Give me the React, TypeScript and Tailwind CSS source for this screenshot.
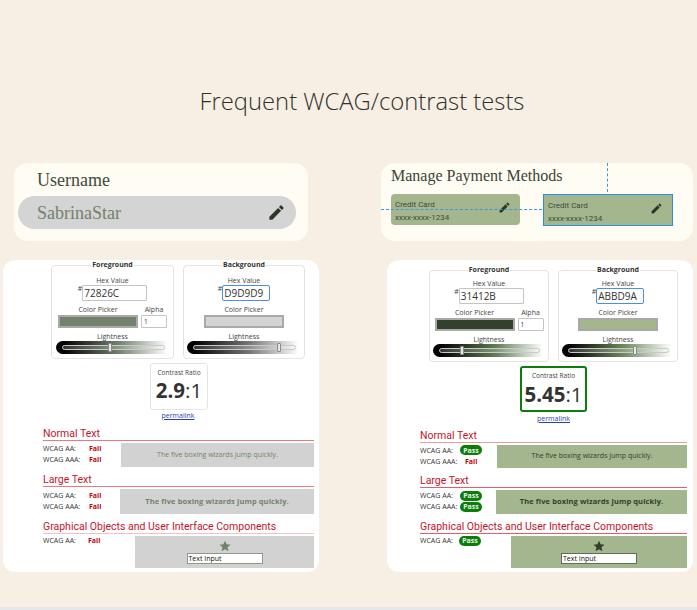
const SANS = "font-['Open_Sans','Noto_Sans',sans-serif]";
const ROBOTO = "font-['Roboto','Liberation_Sans',sans-serif]";
const SERIF = "font-['Liberation_Serif','DejaVu_Serif',serif]";

function Pencil({ className }: { className: string }) {
  return (
    <svg viewBox="0 0 24 24" className={className} fill="#2b3627">
      <path d="M3 17.25V21h3.75L17.81 9.94l-3.75-3.75L3 17.25zM20.71 7.04a1 1 0 0 0 0-1.41l-2.34-2.34a1 1 0 0 0-1.41 0l-1.83 1.83 3.75 3.75 1.83-1.83z" />
    </svg>
  );
}

function Pass() {
  return <span className="inline-flex h-[10px] w-[22px] items-center justify-center rounded-full bg-[#0a7d0a] text-[7px] font-bold leading-none text-[#e8f3e8]">Pass</span>;
}
function Fail() {
  return <span className="inline-block text-[7px] font-bold leading-none text-[#c4000c]">Fail</span>;
}

function Field({
  title, hex, focused, swatch, alpha, thumb, mid, end, box, hexTop, slider,
}: { title: string; hex: string; focused?: boolean; swatch: string; alpha?: boolean; thumb: number; mid: string; end: string; box: string; hexTop: string; slider: string }) {
  return (
    <fieldset className={`${box} flex flex-col items-center rounded-[4px] border border-[#e3e3e3] px-[3px]`}>
      <legend className="mx-auto px-[1px] text-[7px] font-bold leading-[8px] text-[#333]">{title}</legend>
      <div className={`${hexTop} text-[7px] leading-[9px] text-[#444]`}>Hex Value</div>
      <div className="flex items-start">
        <span className="mt-[-1px] text-[7px] leading-[9px] text-[#444]">#</span>
        <div className={`flex h-[16px] items-center border pl-[1px] text-[10px] leading-none text-[#333] ${focused ? "w-[48px] rounded-[2px] border-[#4a8fe0]" : "w-[65px] rounded-[1px] border-[#c4c4c4]"}`}>{hex}</div>
      </div>
      <div className={`mt-[4px] flex items-start justify-center gap-[3px] ${alpha ? "" : "w-[80px]"}`}>
        <div className="flex flex-col items-center">
          <div className="text-[7px] leading-[9px] text-[#444]">Color Picker</div>
          <div className="mt-[1px] h-[13px] w-[80px] border-2 border-[#a9a9a9]" style={{ backgroundColor: swatch }} />
        </div>
        {alpha && (
          <div className="flex flex-col items-center">
            <div className="text-[7px] leading-[9px] text-[#444]">Alpha</div>
            <div className="mt-[1px] flex h-[13px] w-[26px] items-center rounded-[1px] border border-[#c4c4c4] pl-[2px] text-[6.5px] text-[#333]">1</div>
          </div>
        )}
      </div>
      <div className="mt-[4px] text-[7px] leading-[9px] text-[#444]">Lightness</div>
      <div className={`${slider} relative h-[13px] rounded-l-full`} style={{ background: `linear-gradient(to right, #000 6%, ${mid} 55%, ${end} 98%)` }}>
        <div className="absolute left-[6px] right-[5px] top-[4px] h-[5px] rounded-full border border-[#c9c9c9] bg-white/20" />
        <div className="absolute top-[2px] h-[9px] w-[4px] rounded-[1px] border border-[#8a8a8a] bg-[#e8e8e8]" style={{ left: thumb }} />
      </div>
    </fieldset>
  );
}

function Row({ label, children, gap }: { label: string; children: React.ReactNode; gap: string }) {
  return (
    <div className="flex h-[11px] items-center text-[7px] leading-none text-[#333]">
      <span className={gap}>{label}</span>
      {children}
    </div>
  );
}

function Heading({ children, line }: { children: React.ReactNode; line: string }) {
  return <div className={`${ROBOTO} h-[14px] border-b text-[10.5px] leading-[13px] text-[#c4142b] ${line}`}>{children}</div>;
}

function Preview({ bg, fg, bold, className }: { bg: string; fg: string; bold?: boolean; className: string }) {
  return (
    <div className={`flex items-center justify-center ${bold ? "text-[7.5px] font-bold tracking-[0.1px]" : "text-[7px]"} ${className}`} style={{ backgroundColor: bg, color: fg }}>
      The five boxing wizards jump quickly.
    </div>
  );
}

function GraphicPreview({ bg, fg, className, inputBorder }: { bg: string; fg: string; className: string; inputBorder: string }) {
  return (
    <div className={`flex flex-col items-center ${className}`} style={{ backgroundColor: bg }}>
      <svg viewBox="0 0 24 24" className="mb-[1px] mt-[4px] h-[12px] w-[12px]" fill={fg}>
        <path d="M12 1.5l3.2 7.2 7.8.8-5.9 5.2 1.7 7.7L12 18.4l-6.8 4 1.7-7.7L1 9.5l7.8-.8z" />
      </svg>
      <div className="flex h-[11px] w-[76px] items-center bg-white pl-[1px] text-[7px] leading-none text-[#111]" style={{ border: `1.5px solid ${inputBorder}` }}>
        Text Input
      </div>
    </div>
  );
}

export default function App() {
  return (
    <div className={`${SANS} flex h-[610px] w-[697px] flex-col overflow-hidden bg-[#f8efe4] antialiased`}>
      <h1 className="mt-[85px] h-[32px] pl-[27px] text-center text-[23.8px] font-light leading-[32px] text-[#2f322b]">
        Frequent WCAG/contrast tests
      </h1>

      <div className="mt-[46px] flex items-start pl-[14px]">
        <div className="flex h-[78px] w-[294px] flex-col rounded-[14px] bg-[#fffcf4] pl-[4px]">
          <div className={`${SERIF} mt-[6px] pl-[19px] text-[18px] leading-[22px] text-[#3d4a38]`}>Username</div>
          <div className="mt-[5px] flex h-[33px] w-[278px] items-center justify-between rounded-full bg-[#d4d4d4] pl-[19px] pr-[10px]">
            <span className={`${SERIF} text-[18px] leading-none text-[#72826c]`}>SabrinaStar</span>
            <Pencil className="h-[19px] w-[19px]" />
          </div>
        </div>

        <div className="relative ml-[73px] flex h-[78px] w-[312px] flex-col rounded-[14px] bg-[#fffcf4] pl-[10px]">
          <div className={`${SERIF} mt-[2px] text-[16px] leading-[22px] text-[#3a4435]`}>Manage Payment Methods</div>
          <div className="mt-[7px] flex items-start gap-[23px]">
            <div className={`${ROBOTO} flex h-[31px] w-[129px] items-start justify-between rounded-[4px] bg-[#a4b68e] pl-[4px] pr-[9px] pt-[4px] text-[8px] leading-[13px] text-[#3f4a39]`}>
              <div>Credit Card<br />xxxx-xxxx-1234</div>
              <Pencil className="mt-[3px] h-[13px] w-[13px]" />
            </div>
            <div className={`${ROBOTO} flex h-[32px] w-[130px] items-start justify-between border border-[#2b8de0] bg-[#a4b68e] pl-[4px] pr-[9px] pt-[4px] text-[8px] leading-[13px] text-[#3f4a39]`}>
              <div>Credit Card<br />xxxx-xxxx-1234</div>
              <Pencil className="mt-[3px] h-[13px] w-[13px]" />
            </div>
          </div>
          <div className="absolute left-0 top-[46px] w-[161px] border-t border-dashed border-[#3f96e6]" />
          <div className="absolute left-[226px] top-0 h-[29px] border-l border-dashed border-[#3f96e6]" />
        </div>
      </div>

      <div className="mt-[19px] flex items-start pl-[3px]">
        {/* left panel */}
        <div className="h-[312px] w-[316px] rounded-[12px] bg-white">
          <div className="ml-[48px] mt-[1px] flex gap-[9px]">
            <Field box="h-[98px] w-[123px]" hexTop="mt-[7px]" slider="w-[114px]" title="Foreground" hex="72826C" swatch="#72826c" alpha thumb={52} mid="#72826c" end="#ffffff" />
            <Field box="h-[98px] w-[122px]" hexTop="mt-[7px]" slider="w-[114px]" title="Background" hex="D9D9D9" focused swatch="#d4d4d4" thumb={90} mid="#777777" end="#ffffff" />
          </div>
          <div className="ml-[147px] mt-[4px] flex h-[47px] w-[58px] flex-col items-center rounded-[3px] border border-[#e5e5e5]">
            <div className="mt-[3px] text-[6.5px] leading-[11px] text-[#444]">Contrast Ratio</div>
            <div className="text-[20.5px] leading-[24px] text-[#333]"><b>2.9</b>:1</div>
          </div>
          <div className="mt-[1px] pl-[34px] text-center text-[7px] leading-[10px] text-[#2a3fb0] underline">permalink</div>
          <div className="ml-[40px] mr-[5px] mt-[6px]">
            <Heading line="border-[#e67a80]">Normal Text</Heading>
            <div className="mt-[2px] flex h-[24px] items-center">
              <div className="mb-[2px] w-[78px]">
                <Row label="WCAG AA:" gap="w-[46px]"><Fail /></Row>
                <Row label="WCAG AAA:" gap="w-[46px]"><Fail /></Row>
              </div>
              <Preview className="h-full flex-1" bg="#d2d2d2" fg="#72826c" />
            </div>
            <div className="mt-[6px]"><Heading line="border-[#e67a80]">Large Text</Heading></div>
            <div className="mt-[2px] flex h-[25px] items-center">
              <div className="mb-[2px] w-[77px]">
                <Row label="WCAG AA:" gap="w-[46px]"><Fail /></Row>
                <Row label="WCAG AAA:" gap="w-[46px]"><Fail /></Row>
              </div>
              <Preview bold className="h-full flex-1" bg="#d2d2d2" fg="#72826c" />
            </div>
            <div className="mt-[6px]"><Heading line="border-[#f0c4c6]">Graphical Objects and User Interface Components</Heading></div>
            <div className="mt-[2px] flex h-[32px] items-start">
              <div className="mt-[-1px] w-[92px]">
                <Row label="WCAG AA:" gap="w-[45px]"><Fail /></Row>
              </div>
              <GraphicPreview className="h-full flex-1" bg="#d2d2d2" fg="#72826c" inputBorder="#8c9a86" />
            </div>
          </div>
        </div>

        {/* right panel */}
        <div className="ml-[68px] h-[312px] w-[306px] rounded-[12px] bg-white">
          <div className="ml-[42px] mt-[6px] flex gap-[9px]">
            <Field box="h-[96px] w-[120px]" hexTop="mt-[5px]" slider="w-[112px]" title="Foreground" hex="31412B" swatch="#31412b" alpha thumb={27} mid="#5d7a50" end="#ffffff" />
            <Field box="h-[96px] w-[120px]" hexTop="mt-[5px]" slider="w-[112px]" title="Background" hex="ABBD9A" focused swatch="#a4b68e" thumb={71} mid="#6d8a5c" end="#ffffff" />
          </div>
          <div className="ml-[133px] mt-[4px] flex h-[46px] w-[67px] flex-col items-center rounded-[3px] border-2 border-[#0a7d0a]">
            <div className="mt-[2px] text-[6.5px] leading-[11px] text-[#444]">Contrast Ratio</div>
            <div className="mt-[1px] text-[20.5px] leading-[24px] text-[#333]"><b>5.45</b>:1</div>
          </div>
          <div className="mt-[2px] pl-[27px] text-center text-[7px] leading-[10px] text-[#2a3fb0] underline">permalink</div>
          <div className="ml-[33px] mr-[6px] mt-[5px]">
            <Heading line="border-[#ec9aa0]">Normal Text</Heading>
            <div className="mt-[2px] flex h-[23px] items-center">
              <div className="mb-[2px] w-[77px]">
                <Row label="WCAG AA:" gap="w-[40px]"><Pass /></Row>
                <Row label="WCAG AAA:" gap="w-[45px]"><Fail /></Row>
              </div>
              <Preview className="h-full flex-1" bg="#a4b68e" fg="#31412b" />
            </div>
            <div className="mt-[6px]"><Heading line="border-[#d8636c]">Large Text</Heading></div>
            <div className="mt-[2px] flex h-[24px] items-center">
              <div className="mb-[2px] w-[76px]">
                <Row label="WCAG AA:" gap="w-[40px]"><Pass /></Row>
                <Row label="WCAG AAA:" gap="w-[40px]"><Pass /></Row>
              </div>
              <Preview bold className="h-full flex-1" bg="#a4b68e" fg="#31412b" />
            </div>
            <div className="mt-[6px]"><Heading line="border-[#d8636c]">Graphical Objects and User Interface Components</Heading></div>
            <div className="mt-[2px] flex h-[32px] items-start">
              <div className="mt-[-1px] w-[91px]">
                <Row label="WCAG AA:" gap="w-[39px]"><Pass /></Row>
              </div>
              <GraphicPreview className="h-full flex-1" bg="#a4b68e" fg="#31412b" inputBorder="#5e6e58" />
            </div>
          </div>
        </div>
      </div>

      <div className="mt-auto h-[3px] bg-[#e5e7eb]" />
    </div>
  );
}
